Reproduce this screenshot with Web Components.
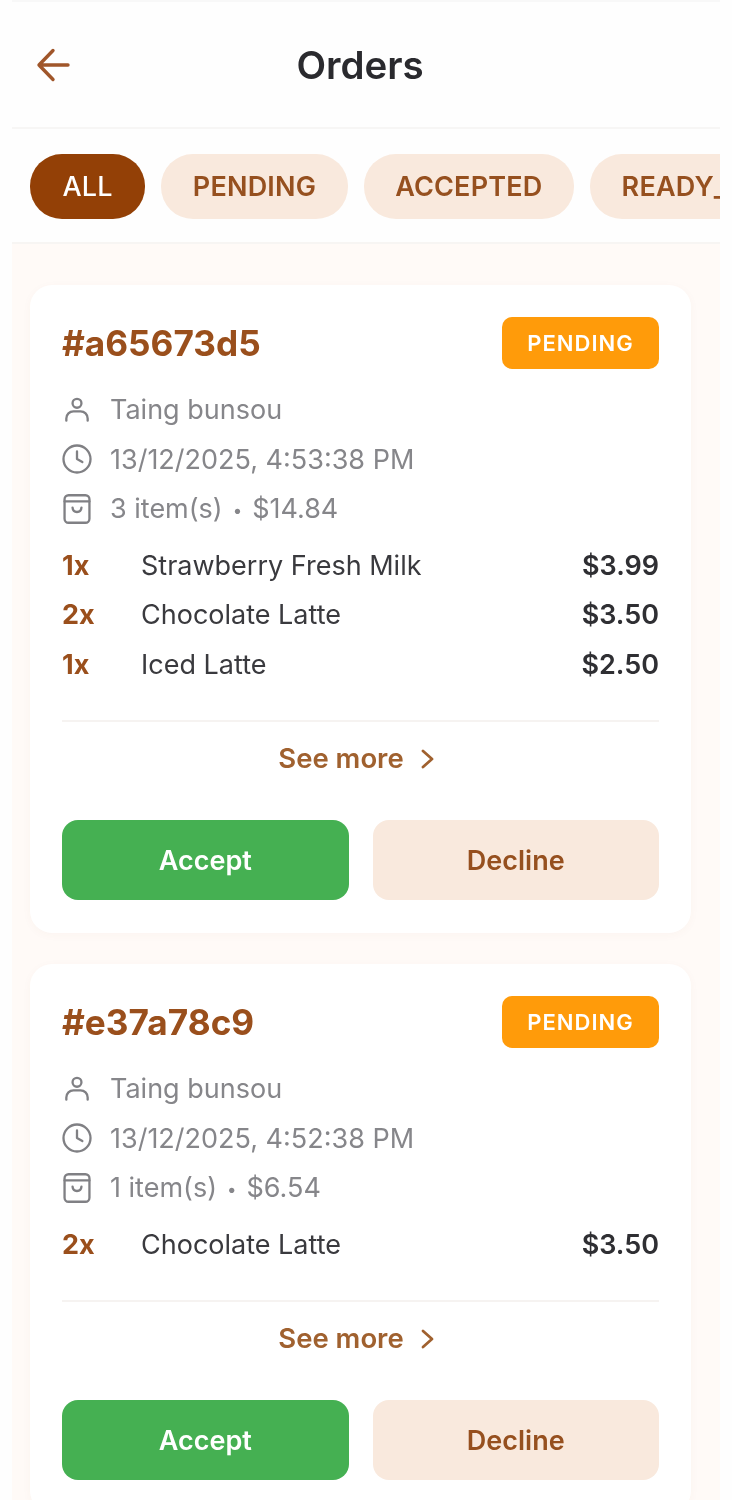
<!DOCTYPE html>
<html lang="en"><head><meta charset="utf-8"><title>Orders</title>
<style>
html,body{margin:0;padding:0;background:#fefefe;height:1500px;overflow:hidden}
body{font-family:Inter,"Liberation Sans",sans-serif}
</style></head><body>
<orders-app>
  <orders-header slot="header">Orders</orders-header>
  <filter-bar slot="filters">
    <filter-chip active>ALL</filter-chip><filter-chip>PENDING</filter-chip><filter-chip>ACCEPTED</filter-chip><filter-chip>READY_FOR_PICKUP</filter-chip>
  </filter-bar>
  <order-card order="#a65673d5" customer="Taing bunsou" time="13/12/2025, 4:53:38 PM" items="3 item(s)" total="$14.84">
    <order-line qty="1x" name="Strawberry Fresh Milk" price="$3.99"></order-line>
    <order-line qty="2x" name="Chocolate Latte" price="$3.50"></order-line>
    <order-line qty="1x" name="Iced Latte" price="$2.50"></order-line>
  </order-card>
  <order-card order="#e37a78c9" customer="Taing bunsou" time="13/12/2025, 4:52:38 PM" items="1 item(s)" total="$6.54">
    <order-line qty="2x" name="Chocolate Latte" price="$3.50"></order-line>
  </order-card>
</orders-app>
<script>
function def(name, html){
  customElements.define(name, class extends HTMLElement{
    connectedCallback(){
      if(this.shadowRoot) return;
      const r=this.attachShadow({mode:'open'});
      r.innerHTML=typeof html==='function'?html(this):html;
    }
  });
}
const esc=s=>(s||'').replace(/&/g,'&amp;').replace(/</g,'&lt;');
def('orders-app',`<style>
:host{display:block;margin:0 12px;width:708px;height:1500px;overflow:hidden;filter:blur(.45px)}
.top{background:#fefefe}
main{background:#fffaf7;padding:41px 29px 0 18px;display:flex;flex-direction:column;gap:31px;height:1300px}
</style><div class="top"><slot name="header"></slot><slot name="filters"></slot></div><main><slot></slot></main>`);
def('orders-header',`<style>
:host{display:flex;align-items:center;height:129px;box-sizing:border-box;border-top:2px solid #f8f8f8;border-bottom:2px solid #f7f6f5;position:relative;justify-content:center;padding-right:12px;padding-top:1px}
svg{position:absolute;left:23px;top:44px;width:38px;height:38px}
h1{margin:0;font:600 38.5px/1 Inter,sans-serif;color:#2a2a2e}
</style><svg viewBox="0 0 38 38" fill="none" stroke="#a0562a" stroke-width="3.4" stroke-linecap="round" stroke-linejoin="round"><path d="M33 19H4M18 4.5 4 19l14 14.500"/></svg><h1><slot></slot></h1>`);
def('filter-bar',`<style>
:host{display:flex;gap:16px;height:115px;box-sizing:border-box;padding:25px 0 0 18px;overflow:hidden;border-bottom:2px solid #f7f5f3;white-space:nowrap}
</style><slot></slot>`);
def('filter-chip',`<style>
:host{display:flex;flex:none;align-items:center;height:65px;padding:0 31.500px;border-radius:32px;background:#f9e9dd;color:#96501f;font:600 27px/1 Inter,sans-serif;letter-spacing:.2px}
:host([active]){background:#934006;color:#fff;padding:0 32.500px;font-weight:500}
</style><slot></slot>`);
const I={
user:'<circle cx="18" cy="10.500" r="5"/><path d="M6 30v-2.500a8 8 0 0 1 8-8h8a8 8 0 0 1 8 8V30"/>',
clock:'<circle cx="18" cy="18" r="15.200"/><path d="M18 9.500V18l6 3.500"/>',
bag:'<rect x="4" y="2.500" width="28" height="31" rx="4.500"/><path d="M4 9.500h28M13 16.500c.5 6.500 9.500 6.500 10 0"/>'};
const ic=k=>`<svg viewBox="0 0 36 36" fill="none" stroke="#808084" stroke-width="2.6" stroke-linecap="round" stroke-linejoin="round">${I[k]}</svg>`;
def('order-card',h=>`<style>
:host{display:block;background:#fff;border-radius:22px;padding:32px 32px 33px;flex:none;box-shadow:0 2px 10px rgba(150,90,50,.035)}
.head{display:flex;justify-content:space-between;align-items:center;height:52px;margin-bottom:16px}
h2{margin:0;padding-top:1px;font:700 35.200px/1 Inter,sans-serif;color:#9a4f1c}
.badge{display:flex;align-items:center;justify-content:center;width:157px;height:52px;border-radius:10px;background:#ff9b0a;color:#fff;font:600 22px/1 Inter,sans-serif;letter-spacing:1px}
.meta{display:flex;align-items:center;gap:18px;height:49.500px;color:#86868a;font:400 27px/1 Inter,sans-serif}
.dot{font-size:.62em;margin:0 10px;vertical-align:.12em}
svg{width:32px;height:32px;flex:none;margin-left:-1px;margin-right:-1px}
.lines{margin-top:7px}
hr{border:0;border-top:2px solid #f6f3f1;margin:31px 0 0}
.more{display:flex;align-items:center;justify-content:center;gap:15px;height:74px;color:#a0612f;font:600 27.500px/1 Inter,sans-serif;margin-right:6px}
.more svg{width:20px;height:24px}
.act{display:flex;gap:24px;margin-top:24px}
button{flex:1;height:80px;border:0;border-radius:16px;font:600 27px/1 Inter,sans-serif;padding:0}
.a{background:#45b052;color:#fff}.d{background:#f9e9dd;color:#96501f}
</style>
<div class="head"><h2>${esc(h.getAttribute('order'))}</h2><span class="badge">PENDING</span></div>
<div class="meta">${ic('user')}<span>${esc(h.getAttribute('customer'))}</span></div>
<div class="meta">${ic('clock')}<span>${esc(h.getAttribute('time'))}</span></div>
<div class="meta">${ic('bag')}<span>${esc(h.getAttribute('items'))}<span class="dot">•</span>${esc(h.getAttribute('total'))}</span></div>
<div class="lines"><slot></slot></div>
<hr>
<div class="more"><span>See more</span><svg viewBox="0 0 20 24" fill="none" stroke="#a0612f" stroke-width="2.800" stroke-linecap="round" stroke-linejoin="round"><path d="M5 4l9 8-9 8"/></svg></div>
<div class="act"><button class="a">Accept</button><button class="d">Decline</button></div>`);
def('order-line',h=>`<style>
:host{display:grid;grid-template-columns:79px 1fr auto;align-items:center;height:49.500px;font:400 27px/1 Inter,sans-serif;color:#3a3a3e}
.q{font-weight:700;color:#9a4f1c}.p{font-weight:600;color:#2f2f33}
</style><span class="q">${esc(h.getAttribute('qty'))}</span><span>${esc(h.getAttribute('name'))}</span><span class="p">${esc(h.getAttribute('price'))}</span>`);
</script></body></html>
